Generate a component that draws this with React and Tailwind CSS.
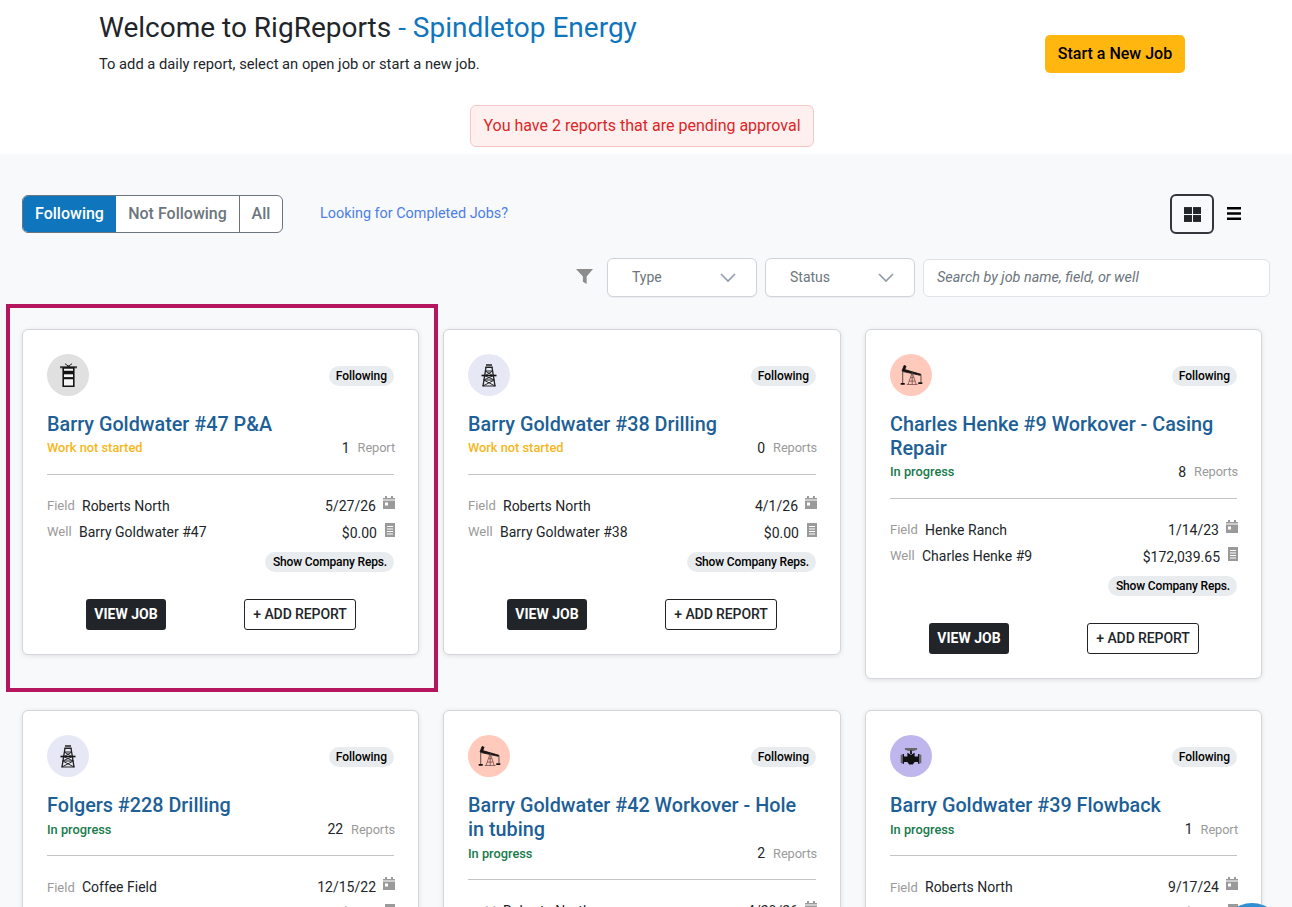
import React from "react";

const Tower = () => (
  <svg viewBox="0 0 24 34" className="w-[17px] h-[24px]" fill="none" stroke="#111" strokeWidth="1.6">
    <path d="M0 6h24" strokeWidth="3" stroke="#444" />
    <path d="M7 1l10 7M17 1L7 8" strokeWidth="1.3" />
    <rect x="4.500" y="7" width="15" height="26" fill="#f4f4f4" strokeWidth="2.200" />
    <rect x="4.500" y="11" width="15" height="5" fill="#111" stroke="none" />
    <rect x="4.500" y="20" width="15" height="3" fill="#111" stroke="none" />
  </svg>
);
const Derrick = () => (
  <svg viewBox="0 0 24 32" className="w-[18px] h-[27px]" fill="none" stroke="#222" strokeWidth="1.3">
    <path d="M8 2h8M7 5h10" strokeWidth="2" />
    <path d="M8 5L4 30M16 5l4 25" strokeWidth="1.8" />
    <path d="M2 16h20" strokeWidth="2.2" stroke="#111" />
    <path d="M7 10h10M5 22h14M3 30h18M7 10l10 6M17 10L7 16M6 16l13 6M18 16L5 22M5 22l15 8M19 22L4 30" />
  </svg>
);
const Pump = () => (
  <svg viewBox="0 0 34 32" className="w-[23px] h-[22px]" fill="none" stroke="#111" strokeWidth="1">
    <path d="M3 10L6 2l3 1-2 5 24 7-1 1.500L5 11z" fill="#111" strokeWidth="1.200" />
    <path d="M4 11v17M31 16v11" />
    <path d="M1 29h6M27 28h6" strokeWidth="2.600" />
    <path d="M18 12l-6 18M18 12l6 18M18 12v18M16 20h4M14 25h8M10 30h16" stroke="#5a3a35" />
  </svg>
);
const Valve = () => (
  <svg viewBox="0 0 36 28" className="w-[22px] h-[17px]" fill="#111">
    <path d="M8 0h20v3l-6 2h-8l-6-2z" fill="#666" />
    <path d="M16.500 4h3v6h-3z" />
    <path d="M12 8l6 3 6-3v6h6v9h-6l-3 4h-6l-3-4H6v-9h6z" />
    <rect x="1" y="11" width="2.500" height="14" fill="#666" />
    <rect x="4" y="10" width="2.500" height="16" />
    <rect x="29.500" y="10" width="2.500" height="16" />
    <rect x="32.500" y="11" width="2.500" height="14" fill="#666" />
  </svg>
);

const Calendar = () => (
  <svg viewBox="0 0 12 13" className="w-[12px] h-[13px]" fill="#9a9a9a">
    <path d="M2 0h2v2h4V0h2v2h2v11H0V2h2z" />
    <rect x="0" y="3.500" width="12" height="1" fill="#fff" />
    <rect x="2" y="6.500" width="3" height="3" fill="#fff" />
  </svg>
);
const Receipt = () => (
  <svg viewBox="0 0 10 14" className="w-[10px] h-[14px]" fill="#9a9a9a">
    <path d="M0 0h10v14H0z" />
    <path d="M2 3h6v1H2zM2 5.500h6v1H2zM2 8h6v1H2zM2 10.500h6v1H2z" fill="#fff" />
  </svg>
);

const circleColors = {
  tower: "bg-[#e0e0e0]",
  derrick: "bg-[#e6e8f5]",
  pump: "bg-[#ffc9bb]",
  valve: "bg-[#c0b6ee]",
};
const icons = { tower: Tower, derrick: Derrick, pump: Pump, valve: Valve };

const jobs = [
  { icon: "tower", title: "Barry Goldwater #47 P&A", status: "Work not started", count: "1", unit: "Report", field: "Roberts North", date: "5/27/26", well: "Barry Goldwater #47", amount: "$0.00" },
  { icon: "derrick", title: "Barry Goldwater #38 Drilling", status: "Work not started", count: "0", unit: "Reports", field: "Roberts North", date: "4/1/26", well: "Barry Goldwater #38", amount: "$0.00" },
  { icon: "pump", title: "Charles Henke #9 Workover - Casing Repair", status: "In progress", count: "8", unit: "Reports", field: "Henke Ranch", date: "1/14/23", well: "Charles Henke #9", amount: "$172,039.65" },
  { icon: "derrick", title: "Folgers #228 Drilling", status: "In progress", count: "22", unit: "Reports", field: "Coffee Field", date: "12/15/22", well: "Folgers #228", amount: "$0.00" },
  { icon: "pump", title: "Barry Goldwater #42 Workover - Hole in tubing", status: "In progress", count: "2", unit: "Reports", field: "Roberts North", date: "4/20/26", well: "Barry Goldwater #42", amount: "$0.00" },
  { icon: "valve", title: "Barry Goldwater #39 Flowback", status: "In progress", count: "1", unit: "Report", field: "Roberts North", date: "9/17/24", well: "Barry Goldwater #39", amount: "$0.00" },
];

function Card({ job }) {
  const Icon = icons[job.icon];
  const notStarted = job.status === "Work not started";
  return (
    <div className="bg-white border border-[#d4d6d9] rounded-[6px] shadow-[0_1px_5px_rgba(0,0,0,0.1)] px-6 pt-6 pb-6 self-start">
      <div className="flex items-center justify-between">
        <div className={`w-[42px] h-[42px] rounded-full flex items-center justify-center ${circleColors[job.icon]}`}>
          <Icon />
        </div>
        <span className="mt-[2px] bg-[#e9ecef] rounded-full px-[7px] h-[20px] flex items-center text-[12px] tracking-[-0.05px] font-medium text-black">Following</span>
      </div>
      <h2 className="mt-[17px] text-[19.8px] leading-[24px] font-medium text-[#1d5f96]">{job.title}</h2>
      <div className="flex items-center justify-between mt-[1px] h-[20px]">
        <span className={`text-[12.8px] font-medium ${notStarted ? "text-[#f5b71a]" : "text-[#177a4b]"}`}>{job.status}</span>
        <span className="flex items-center text-[12.8px] tracking-[-0.1px] text-[#9a9a9a] -mr-[1px]">
          <span className="text-[14px] text-[#212529] mr-[8px]">{job.count}</span>
          {job.unit}
        </span>
      </div>
      <div className="border-t border-[#c4c4c4] mt-[16px]" />
      <div className="flex items-center justify-between mt-[19px] h-[24px]">
        <span className="flex items-center">
          <span className="text-[13px] text-[#9a9a9a] w-[35px]">Field</span>
          <span className="text-[14px] text-[#212529]">{job.field}</span>
        </span>
        <span className="flex items-center text-[14px] text-[#212529] -mr-[1px]">
          {job.date}
          <span className="ml-[7px] -mt-[8px]"><Calendar /></span>
        </span>
      </div>
      <div className="flex items-center justify-between mt-[2px] h-[24px]">
        <span className="flex items-center">
          <span className="text-[13px] text-[#9a9a9a] w-[32px]">Well</span>
          <span className="text-[14px] text-[#212529]">{job.well}</span>
        </span>
        <span className="flex items-center text-[14px] text-[#212529] -mr-[1px]">
          <span className="mt-[2px]">{job.amount}</span>
          <span className="ml-[8px] -mt-[4px]"><Receipt /></span>
        </span>
      </div>
      <div className="flex justify-end mt-[8px]">
        <span className="bg-[#e9ecef] rounded-full pl-[8px] pr-[7px] h-[20px] flex items-center text-[12px] tracking-[-0.15px] font-medium text-black">Show Company Reps.</span>
      </div>
      <div className="flex mt-[27px] ml-[39px] gap-[78px]">
        <button className="bg-[#212529] text-white text-[14px] font-bold rounded-[3px] w-[80px] h-[31px]">VIEW JOB</button>
        <button className="bg-white text-[#212529] text-[14px] tracking-[-0.1px] font-medium border border-[#212529] rounded-[3px] w-[112px] h-[31px]">+ ADD REPORT</button>
      </div>
    </div>
  );
}

export default function App() {
  return (
    <div className="relative h-[907px] overflow-hidden bg-[#f8f9fb] font-['Roboto',sans-serif] text-[#212529]">
      <header className="bg-white h-[154px]">
        <div className="flex justify-between pl-[99px] pr-[107px] pt-[10px]">
          <div>
            <h1 className="text-[28px] leading-[36px] font-normal text-[#212529]">
              Welcome to RigReports <span className="text-[#0f75bc]">- Spindletop Energy</span>
            </h1>
            <p className="text-[14.72px] leading-[20px] mt-[8px]">To add a daily report, select an open job or start a new job.</p>
          </div>
          <button className="mt-[25px] w-[140px] h-[38px] bg-[#ffb70f] rounded-[5px] text-[16px] font-medium text-black">Start a New Job</button>
        </div>
        <div className="flex justify-center mt-[31px] pr-[8px]">
          <div className="h-[42px] px-[12px] flex items-center bg-[#fff0f0] border border-[#f9c5c7] rounded-[6px] text-[16px] text-[#dc2626]">
            You have 2 reports that are pending approval
          </div>
        </div>
      </header>

      <main className="px-[22px] relative">
        <div className="flex items-center justify-between pt-[40px] pr-[8px]">
          <div className="flex items-center">
            <div className="flex h-[38px] border border-[#6c757d] rounded-[6px] overflow-hidden text-[16px] font-medium text-[#6c757d] bg-white">
              <span className="w-[93px] bg-[#0f75bc] text-white flex items-center justify-center">Following</span>
              <span className="w-[123px] flex items-center justify-center">Not Following</span>
              <span className="w-[43px] border-l border-[#6c757d] flex items-center justify-center">All</span>
            </div>
            <a className="ml-[37px] text-[14.4px] text-[#4d7ee8]">Looking for Completed Jobs?</a>
          </div>
          <div className="flex items-center gap-[13px] mr-[21px]">
            <div className="w-[44px] h-[40px] border-2 border-[#33373b] rounded-[6px] flex items-center justify-center">
              <svg viewBox="0 0 16 16" className="w-[17px] h-[17px]" fill="#212529">
                <rect x="0" y="1" width="7.500" height="6.500" />
                <rect x="8.500" y="1" width="7.500" height="6.500" />
                <rect x="0" y="8.500" width="7.500" height="6.500" />
                <rect x="8.500" y="8.500" width="7.500" height="6.500" />
              </svg>
            </div>
            <svg viewBox="0 0 14 13" className="w-[14px] h-[13px] -mt-[1px]" fill="#000">
              <rect y="0" width="14" height="2.500" />
              <rect y="5.250" width="14" height="2.500" />
              <rect y="10.500" width="14" height="2.500" />
            </svg>
          </div>
        </div>

        <div className="flex items-center justify-end gap-[6px] mt-[24px]">
          <svg viewBox="0 0 16 16" className="w-[17px] h-[17px] mr-[8px] -mt-[2px]" fill="#8c8c8c">
            <path d="M0 1h16L10 8v7L6.500 13V8z" />
          </svg>
          <div className="w-[150px] h-[39px] bg-white border border-[#ced4da] rounded-[6px] shadow-[0_1px_1px_rgba(0,0,0,0.05)] flex items-center justify-between pl-[24px] pr-[20px] text-[14px] text-[#6c757d]">
            Type
            <svg viewBox="0 0 16 10" className="w-[16px] h-[10px]" fill="none" stroke="#8f9bab" strokeWidth="1.6"><path d="M1 1l7 7 7-7" /></svg>
          </div>
          <div className="w-[150px] h-[39px] ml-[2px] bg-white border border-[#ced4da] rounded-[6px] shadow-[0_1px_1px_rgba(0,0,0,0.05)] flex items-center justify-between pl-[24px] pr-[20px] text-[14px] text-[#6c757d]">
            Status
            <svg viewBox="0 0 16 10" className="w-[16px] h-[10px]" fill="none" stroke="#8f9bab" strokeWidth="1.6"><path d="M1 1l7 7 7-7" /></svg>
          </div>
          <div className="w-[347px] h-[38px] ml-[2px] bg-white border border-[#dfe2e6] rounded-[6px] flex items-center pl-[13px] text-[14.4px] italic text-[#6c757d]">
            Search by job name, field, or well
          </div>
        </div>

        <div className="grid grid-cols-[397px_398px_397px] gap-x-[24px] gap-y-[31.4px] mt-[32px] items-start">
          {jobs.map((j) => (
            <Card key={j.title} job={j} />
          ))}
        </div>
        <div className="absolute left-[6px] top-[150px] w-[432px] h-[388px] border-[4px] border-[#b5175f] pointer-events-none" />
      </main>

      <div className="absolute left-[1222px] top-[903px] w-[60px] h-[60px] rounded-full bg-[#2f8fd3]" />
    </div>
  );
}
